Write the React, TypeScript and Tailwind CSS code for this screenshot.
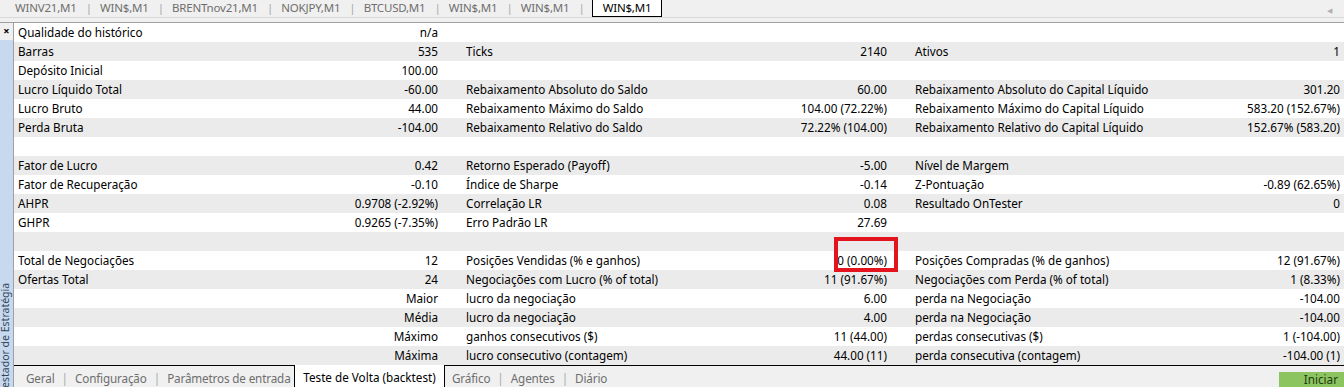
import React from 'react'

type Cell = [string, string]

const rows: Cell[][] = [
  [['Qualidade do histórico', 'n/a'], ['', ''], ['', '']],
  [['Barras', '535'], ['Ticks', '2140'], ['Ativos', '1']],
  [['Depósito Inicial', '100.00'], ['', ''], ['', '']],
  [['Lucro Líquido Total', '-60.00'], ['Rebaixamento Absoluto do Saldo', '60.00'], ['Rebaixamento Absoluto do Capital Líquido', '301.20']],
  [['Lucro Bruto', '44.00'], ['Rebaixamento Máximo do Saldo', '104.00 (72.22%)'], ['Rebaixamento Máximo do Capital Líquido', '583.20 (152.67%)']],
  [['Perda Bruta', '-104.00'], ['Rebaixamento Relativo do Saldo', '72.22% (104.00)'], ['Rebaixamento Relativo do Capital Líquido', '152.67% (583.20)']],
  [['', ''], ['', ''], ['', '']],
  [['Fator de Lucro', '0.42'], ['Retorno Esperado (Payoff)', '-5.00'], ['Nível de Margem', '']],
  [['Fator de Recuperação', '-0.10'], ['Índice de Sharpe', '-0.14'], ['Z-Pontuação', '-0.89 (62.65%)']],
  [['AHPR', '0.9708 (-2.92%)'], ['Correlação LR', '0.08'], ['Resultado OnTester', '0']],
  [['GHPR', '0.9265 (-7.35%)'], ['Erro Padrão LR', '27.69'], ['', '']],
  [['', ''], ['', ''], ['', '']],
  [['Total de Negociações', '12'], ['Posições Vendidas (% e ganhos)', '0 (0.00%)'], ['Posições Compradas (% de ganhos)', '12 (91.67%)']],
  [['Ofertas Total', '24'], ['Negociações com Lucro (% of total)', '11 (91.67%)'], ['Negociações com Perda (% of total)', '1 (8.33%)']],
  [['', 'Maior'], ['lucro da negociação', '6.00'], ['perda na Negociação', '-104.00']],
  [['', 'Média'], ['lucro da negociação', '4.00'], ['perda na Negociação', '-104.00']],
  [['', 'Máximo'], ['ganhos consecutivos ($)', '11 (44.00)'], ['perdas consecutivas ($)', '1 (-104.00)']],
  [['', 'Máxima'], ['lucro consecutivo (contagem)', '44.00 (11)'], ['perda consecutiva (contagem)', '-104.00 (1)']],
]

const topTabs = ['WINV21,M1', 'WIN$,M1', 'BRENTnov21,M1', 'NOKJPY,M1', 'BTCUSD,M1', 'WIN$,M1', 'WIN$,M1']
const bottomLeft = ['Geral', 'Configuração', 'Parâmetros de entrada']
const bottomRight = ['Gráfico', 'Agentes', 'Diário']

function Sep() {
  return <span className="text-[#a8a8a8] px-[7px] tracking-normal">|</span>
}

function App() {
  return (
    <div
      className="relative w-[1344px] h-[387px] overflow-hidden bg-[#f0f0f0] text-[11.7px] text-black whitespace-nowrap"
      style={{ fontFamily: '"Noto Sans", "Open Sans", sans-serif' }}
    >
      {/* top tabs */}
      <div className="h-[23px] border-b border-[#a0a0a0]">
        <div className="h-[18px] flex items-start border-b border-[#dadada] pl-[15px] leading-[16px] text-[11.5px] tracking-[-0.2px]">
          {topTabs.map((t, i) => (
            <span key={i} className="flex text-[#6e6e6e]">
              {t}
              <span className="text-[#a8a8a8] pl-[9px] pr-[8px] tracking-normal">|</span>
            </span>
          ))}
          <div className="h-[18px] -mt-px px-[10px] bg-white border border-black text-black leading-[16px] -ml-[1px]">
            WIN$,M1
          </div>
          <div className="flex-1" />
          <span className="text-[#b0b0b0] text-[7px] mr-[12px] mt-[3px]">◀</span>
        </div>
      </div>

      <div className="flex h-[364px]">
        {/* left strip */}
        <div className="w-[14px] flex flex-col border-r border-[#a0a0a0]">
          <div className="h-[17px] flex justify-center items-start text-[11px] font-bold leading-[14px] pt-px">×</div>
          <div className="flex-1 bg-[#c7d9ee] relative overflow-hidden">
            <div className="absolute left-[-1px] bottom-[-6px] origin-bottom-left -rotate-90 translate-x-[13px] whitespace-nowrap text-[#32465c] text-[10.5px] leading-[13px]">
              Testador de Estratégia
            </div>
          </div>
        </div>

        {/* content */}
        <div className="flex-1 flex flex-col">
          <div className="flex flex-col bg-white">
            {rows.map((r, i) => (
              <div key={i} className={`h-[19px] flex leading-[19px] ${i % 2 === 1 ? 'bg-[#ebebeb]' : 'bg-white'}`}>
                <div className="w-[449px] flex justify-between pl-[4px] pr-[25px]">
                  <span>{r[0][0]}</span>
                  <span>{r[0][1]}</span>
                </div>
                <div className="w-[449px] flex justify-between pl-[3px] pr-[25px]">
                  <span>{r[1][0]}</span>
                  <span>{r[1][1]}</span>
                </div>
                <div className="flex-1 flex justify-between pl-[3px] pr-[4px]">
                  <span>{r[2][0]}</span>
                  <span>{r[2][1]}</span>
                </div>
              </div>
            ))}
          </div>

          {/* bottom tabs */}
          <div className="h-[22px] flex items-stretch">
            <div className="w-[280px] border-t border-black flex items-center pl-[12px] pt-[2px] leading-[18px] text-[#6e6e6e] tracking-[-0.15px]">
              {bottomLeft.map((t, i) => (
                <span key={i} className="flex">
                  {i > 0 && <Sep />}
                  {t}
                </span>
              ))}
            </div>
            <div className="w-[151px] bg-white border-x border-black flex items-center justify-center pt-[2px] leading-[18px]">
              Teste de Volta (backtest)
            </div>
            <div className="flex-1 border-t border-black flex items-center pl-[7px] pt-[2px] leading-[18px] text-[#6e6e6e] tracking-[-0.15px]">
              {bottomRight.map((t, i) => (
                <span key={i} className="flex">
                  {i > 0 && <Sep />}
                  {t}
                </span>
              ))}
              <div className="flex-1" />
              <div className="self-end w-[65px] h-[15px] bg-[#8cc45f] text-[#1f3a10] leading-[14px] flex items-start justify-end pr-[6px] tracking-normal">
                Iniciar
              </div>
            </div>
          </div>
        </div>
      </div>

      {/* annotation box */}
      <div className="absolute left-[834px] top-[237px] w-[64px] h-[35px] border-4 border-[#e3141e]" />
    </div>
  )
}

export default App
